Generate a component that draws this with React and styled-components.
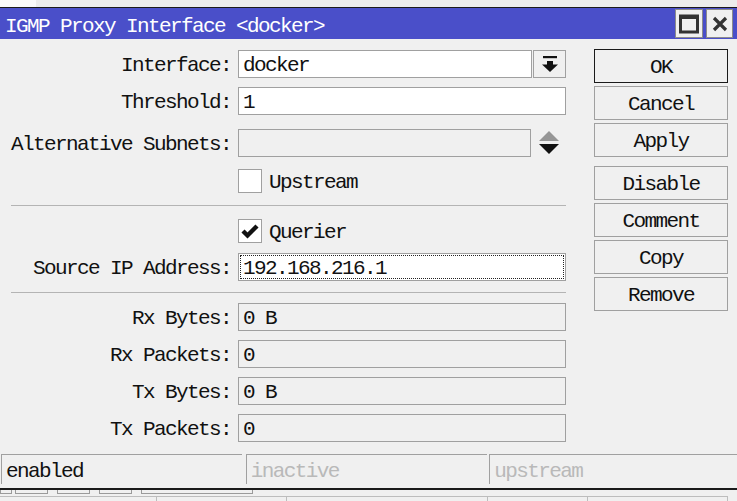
import React from 'react';
import styled, { createGlobalStyle } from 'styled-components';

const GlobalStyle = createGlobalStyle`
  html, body {
    margin: 0;
    padding: 0;
    background: #f0f0f0;
  }
`;

const FONT = `"Liberation Mono", "DejaVu Sans Mono", monospace`;

const Page = styled.div`
  width: 737px;
  height: 501px;
  overflow: hidden;
  background: #f0f0f0;
  font-family: ${FONT};
  font-size: 21px;
  letter-spacing: -1.6px;
  color: #111;
  display: flex;
  flex-direction: column;
`;

const TopStrip = styled.div`
  height: 7px;
  border-bottom: 1px solid #1a1a1a;
  background: linear-gradient(to right, #fafafa 0 36px, #ececec 36px);
`;

const TitleBar = styled.div`
  height: 31px;
  background: #4a4fc9;
  display: flex;
  align-items: center;
  justify-content: space-between;
  padding: 0 4px 0 5px;
`;

const Title = styled.div`
  color: #fff;
  padding-top: 5px;
`;

const WinButtons = styled.div`
  display: flex;
  gap: 3px;
  align-items: center;
`;

const WinButton = styled.div`
  width: ${p => p.w}px;
  height: 29px;
  box-sizing: border-box;
  background: #f0f0f0;
  border: 1px solid #8c8c8c;
  display: flex;
  align-items: center;
  justify-content: center;
`;

const Main = styled.div`
  display: flex;
  padding-top: 10px;
`;

const Form = styled.div`
  width: 566px;
  padding-top: 1px;
  display: flex;
  flex-direction: column;
`;

const Row = styled.div`
  display: grid;
  grid-template-columns: 231px 328px;
  column-gap: 7px;
  align-items: center;
  height: ${p => p.h || 28}px;
  margin-top: ${p => p.mt || 0}px;
`;

const Label = styled.div`
  text-align: right;
  white-space: nowrap;
  padding-top: 3px;
`;

const FieldWrap = styled.div`
  display: flex;
  align-items: center;
  height: 100%;
`;

const Field = styled.div`
  flex: 1;
  height: 100%;
  box-sizing: border-box;
  border: 1px solid #a0a0a0;
  background: ${p => (p.disabled ? '#f0f0f0' : '#fff')};
  padding: 3px 0 0 4px;
  display: flex;
  align-items: center;
  white-space: nowrap;
  ${p => p.focused && `
    outline: 1px dotted #222;
    outline-offset: -3px;
  `}
`;

const ReadOnly = styled(Field)`
  background: #f0f0f0;
`;

const DropButton = styled.div`
  width: 33px;
  height: 100%;
  box-sizing: border-box;
  margin-left: 1px;
  border: 1px solid #a0a0a0;
  display: flex;
  align-items: center;
  justify-content: center;
`;

const Spinner = styled.div`
  width: 35px;
  display: flex;
  justify-content: center;
  align-items: center;
  height: 100%;
`;

const CheckRow = styled.div`
  display: flex;
  align-items: center;
  gap: 7px;
`;

const CheckText = styled.span`
  padding-top: 3px;
`;

const CheckBox = styled.div`
  width: 24px;
  height: 24px;
  box-sizing: border-box;
  border: 1px solid #a0a0a0;
  background: #fff;
  display: flex;
  align-items: center;
  justify-content: center;
`;

const Separator = styled.div`
  margin-top: ${p => p.mt}px;
  margin-left: 11px;
  height: 1px;
  background: #b4b4b4;
`;

const Buttons = styled.div`
  margin-left: 28px;
  width: 134px;
  display: flex;
  flex-direction: column;
`;

const Button = styled.div`
  height: 34px;
  box-sizing: border-box;
  margin-top: ${p => p.mt || 0}px;
  padding-top: 3px;
  border: 1px solid ${p => (p.primary ? '#1a1a1a' : '#a0a0a0')};
  background: #f0f0f0;
  display: flex;
  align-items: center;
  justify-content: center;
`;

const StatusBar = styled.div`
  margin-top: 12px;
  height: 30px;
  display: flex;
  padding-left: 1px;
`;

const StatusCell = styled.div`
  width: ${p => p.w}px;
  margin-left: ${p => p.ml || 0}px;
  box-sizing: border-box;
  border-top: 1px solid #a0a0a0;
  border-left: 1px solid #a0a0a0;
  padding: 3px 0 0 4px;
  display: flex;
  align-items: center;
  color: ${p => (p.muted ? '#b9b9b9' : '#111')};
`;

const BottomLine = styled.div`
  margin-top: 4px;
  height: 2px;
  background: #1a1a1a;
`;

const Tabs = styled.div`
  display: flex;
  height: 4px;
`;

const Tab = styled.div`
  width: ${p => p.w}px;
  margin-left: ${p => p.ml}px;
  box-sizing: border-box;
  border: 1px solid #9a9a9a;
  border-top: none;
`;

const LowerCells = styled.div`
  margin-top: 2px;
  display: flex;
  flex: 1;
`;

const LowerCell = styled.div`
  width: ${p => p.w}px;
  box-sizing: border-box;
  border-top: 1px solid #bdbdbd;
  border-right: 1px solid #bdbdbd;
`;

const DropIcon = () => (
  <svg width="18" height="20" viewBox="0 0 18 20">
    <rect x="2" y="2" width="14" height="2.2" fill="#111" />
    <rect x="6" y="7" width="6" height="4" fill="#111" />
    <polygon points="1,10.5 17,10.5 9,18" fill="#111" />
  </svg>
);

const SpinIcon = () => (
  <svg width="20" height="26" viewBox="0 0 20 26">
    <polygon points="10,1 20,11 0,11" fill="#969696" />
    <polygon points="0,14 20,14 10,24" fill="#111" />
  </svg>
);

const CheckIcon = () => (
  <svg width="18" height="16" viewBox="0 0 18 16">
    <path d="M2 8 L6.5 12.5 L16 3" fill="none" stroke="#111" strokeWidth="4.4" />
  </svg>
);

const MaxIcon = () => (
  <svg width="20" height="20" viewBox="0 0 20 20">
    <rect x="1.5" y="2" width="17" height="16" fill="none" stroke="#333" strokeWidth="3" />
    <rect x="1.5" y="2" width="17" height="3" fill="#333" />
  </svg>
);

const CloseIcon = () => (
  <svg width="16" height="16" viewBox="0 0 16 16">
    <path d="M2 2 L14 14 M14 2 L2 14" stroke="#333" strokeWidth="3.2" />
  </svg>
);

const stats = [
  ['Rx Bytes:', '0 B', 10],
  ['Rx Packets:', '0', 9],
  ['Tx Bytes:', '0 B', 9],
  ['Tx Packets:', '0', 9],
];

const App = () => (
  <Page>
    <GlobalStyle />
    <TopStrip />
    <TitleBar>
      <Title>IGMP Proxy Interface &lt;docker&gt;</Title>
      <WinButtons>
        <WinButton w={28}><MaxIcon /></WinButton>
        <WinButton w={27}><CloseIcon /></WinButton>
      </WinButtons>
    </TitleBar>
    <Main>
      <Form>
        <Row>
          <Label>Interface:</Label>
          <FieldWrap>
            <Field>docker</Field>
            <DropButton><DropIcon /></DropButton>
          </FieldWrap>
        </Row>
        <Row mt={9}>
          <Label>Threshold:</Label>
          <FieldWrap><Field>1</Field></FieldWrap>
        </Row>
        <Row mt={14}>
          <Label>Alternative Subnets:</Label>
          <FieldWrap>
            <Field disabled />
            <Spinner><SpinIcon /></Spinner>
          </FieldWrap>
        </Row>
        <Row mt={11} h={24}>
          <span />
          <CheckRow>
            <CheckBox />
            <CheckText>Upstream</CheckText>
          </CheckRow>
        </Row>
        <Separator mt={13} />
        <Row mt={12} h={24}>
          <span />
          <CheckRow>
            <CheckBox><CheckIcon /></CheckBox>
            <CheckText>Querier</CheckText>
          </CheckRow>
        </Row>
        <Row mt={11}>
          <Label>Source IP Address:</Label>
          <FieldWrap><Field focused>192.168.216.1</Field></FieldWrap>
        </Row>
        <Separator mt={11} />
        {stats.map(([label, value, mt]) => (
          <Row key={label} mt={mt}>
            <Label>{label}</Label>
            <FieldWrap><ReadOnly>{value}</ReadOnly></FieldWrap>
          </Row>
        ))}
      </Form>
      <Buttons>
        <Button primary>OK</Button>
        <Button mt={3}>Cancel</Button>
        <Button mt={3}>Apply</Button>
        <Button mt={9}>Disable</Button>
        <Button mt={3}>Comment</Button>
        <Button mt={3}>Copy</Button>
        <Button mt={3}>Remove</Button>
      </Buttons>
    </Main>
    <StatusBar>
      <StatusCell w={241}>enabled</StatusCell>
      <StatusCell w={242} ml={4} muted>inactive</StatusCell>
      <StatusCell w={248} ml={2} muted>upstream</StatusCell>
    </StatusBar>
    <BottomLine />
    <Tabs>
      <Tab w={12} ml={0} />
      <Tab w={33} ml={3} />
      <Tab w={33} ml={9} />
      <Tab w={33} ml={9} />
      <Tab w={112} ml={9} />
    </Tabs>
    <LowerCells>
      <LowerCell w={157} />
      <LowerCell w={130} />
      <LowerCell w={201} />
      <LowerCell w={100} />
      <LowerCell w={140} />
    </LowerCells>
  </Page>
);

export default App;
